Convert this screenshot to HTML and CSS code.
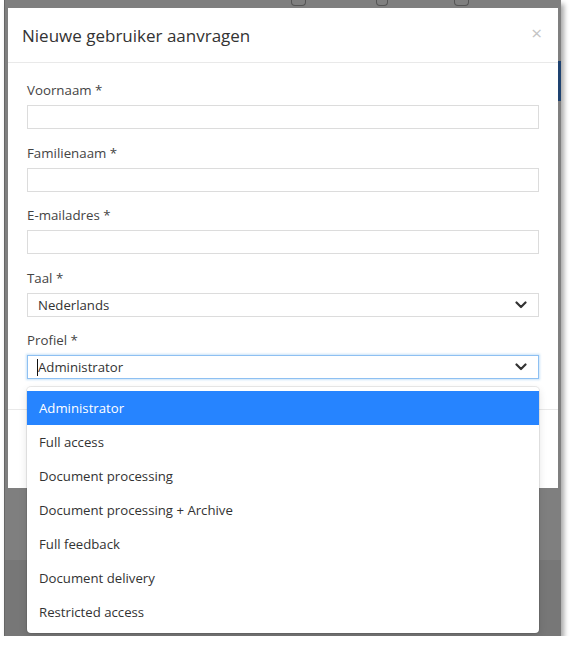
FILE: index.html
```html
<!DOCTYPE html>
<html lang="nl">
<head>
    <meta charset="UTF-8">
    <title>Nieuwe gebruiker aanvragen</title>
    <link rel="stylesheet" href="styles.css">
</head>
<body>
    <div class="backdrop">
        <div class="backdrop-top">
            <span class="peek peek-1"></span>
            <span class="peek peek-2"></span>
            <span class="peek peek-3"></span>
        </div>
        <div class="modal">
            <div class="modal-header">
                <h1>Nieuwe gebruiker aanvragen</h1>
                <span class="close">&times;</span>
            </div>
            <div class="modal-body">
                <div class="form-group">
                    <label>Voornaam *</label>
                    <div class="field"></div>
                </div>
                <div class="form-group">
                    <label>Familienaam *</label>
                    <div class="field"></div>
                </div>
                <div class="form-group">
                    <label>E-mailadres *</label>
                    <div class="field"></div>
                </div>
                <div class="form-group">
                    <label>Taal *</label>
                    <div class="field select">
                        <span>Nederlands</span>
                        <svg class="chevron" width="12" height="8" viewBox="0 0 12 8"><polyline points="1.5,1.5 6,6 10.5,1.5" fill="none" stroke="#333" stroke-width="2.2" stroke-linecap="round" stroke-linejoin="round"/></svg>
                    </div>
                </div>
                <div class="form-group last">
                    <label>Profiel *</label>
                    <div class="field select focused">
                        <span><i class="caret"></i>Administrator</span>
                        <svg class="chevron" width="12" height="8" viewBox="0 0 12 8"><polyline points="1.5,1.5 6,6 10.5,1.5" fill="none" stroke="#333" stroke-width="2.2" stroke-linecap="round" stroke-linejoin="round"/></svg>
                    </div>
                    <ul class="menu">
                        <li class="active">Administrator</li>
                        <li>Full access</li>
                        <li>Document processing</li>
                        <li>Document processing + Archive</li>
                        <li>Full feedback</li>
                        <li>Document delivery</li>
                        <li>Restricted access</li>
                    </ul>
                </div>
            </div>
            <div class="modal-footer"></div>
        </div>
    </div>
</body>
</html>
```

FILE: styles.css
```css
body {
    margin: 0;
    background-color: white;
    font-family: 'Open Sans', 'Liberation Sans', sans-serif;
    color: #333;
}
.backdrop {
    margin-left: 4px;
    width: 557px;
    height: 636px;
    background-color: #7f7f7f;
    background-image:
        linear-gradient(#1e4270, #1e4270),
        linear-gradient(#777, #777);
    background-repeat: no-repeat;
    background-size: 3px 40px, 100% 76px;
    background-position: right 0 top 61px, left 0 bottom 0;
    box-shadow: 3px 4px 5px rgba(0, 0, 0, 0.35);
    border-left: 1px solid #666;
    box-sizing: border-box;
}
.backdrop-top {
    height: 8px;
    display: flex;
    align-items: flex-end;
}
.peek {
    display: block;
    height: 6px;
    margin-bottom: 2px;
    border: 1px solid #555;
    border-top: none;
    border-radius: 0 0 4px 4px;
}
.peek-1 { width: 13px; margin-left: 286px; }
.peek-2 { width: 10px; margin-left: 70px; }
.peek-3 { width: 13px; margin-left: 66px; }
.modal {
    margin-left: 3px;
    width: 550px;
    height: 480px;
    background-color: white;
    display: flex;
    flex-direction: column;
}
.modal-header {
    height: 54px;
    padding: 0 16px 0 14px;
    display: flex;
    align-items: center;
    justify-content: space-between;
    border-bottom: 1px solid #e9e9e9;
}
.modal-header h1 {
    margin: 0;
    font-size: 17px;
    font-weight: 400;
    color: #333;
}
.close {
    font-size: 19px;
    color: #c4c4c4;
    margin-top: -4px;
}
.modal-body {
    padding: 17px 19px 0;
    height: 346px;
    box-sizing: border-box;
}
.form-group {
    margin-bottom: 13.5px;
    position: relative;
}
.form-group.last {
    margin-bottom: 0;
}
label {
    display: block;
    height: 20px;
    line-height: 20px;
    margin-bottom: 5px;
    font-size: 13.3px;
    color: #444;
}
.field {
    height: 24px;
    border: 1px solid #dcdcdc;
    box-sizing: border-box;
    font-size: 13.2px;
    color: #333;
    display: flex;
    align-items: center;
    justify-content: space-between;
    padding: 0 11px 0 10px;
}
.field.focused {
    border-color: #8ec0f2;
    box-shadow: 0 0 2px 1px rgba(102, 175, 233, 0.35);
}
.caret {
    display: inline-block;
    width: 1px;
    height: 17px;
    background-color: #111;
    vertical-align: middle;
    margin-left: -1px;
}
.chevron {
    display: block;
}
.modal-footer {
    flex: 1;
    border-top: 1px solid #e9e9e9;
}
.menu {
    position: absolute;
    top: 57px;
    left: 0;
    right: 0;
    margin: 0;
    padding: 4px 0;
    list-style: none;
    background-color: white;
    border-radius: 4px;
    box-shadow: 0 0 0 1px rgba(0, 0, 0, 0.08), 0 3px 8px rgba(0, 0, 0, 0.12);
}
.menu li {
    height: 34px;
    line-height: 34px;
    padding: 0 12px;
    font-size: 13.2px;
    color: #333;
}
.menu li.active {
    background-color: #2684ff;
    color: white;
}
```
